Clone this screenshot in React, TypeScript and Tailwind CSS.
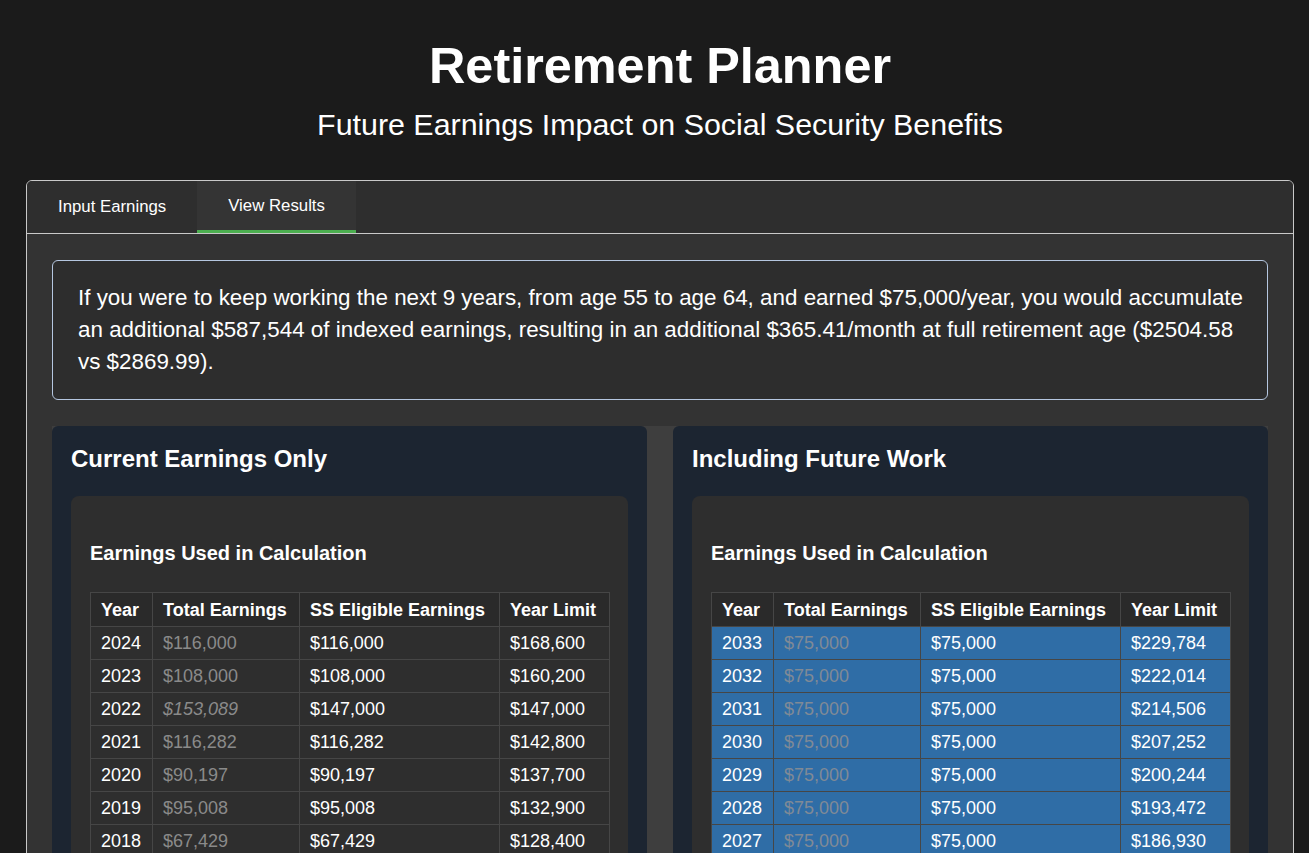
import React, { useState } from 'react';

type Row = { year: number; total: number; limit: number };

const currentRows: Row[] = [
  { year: 2024, total: 116000, limit: 168600 },
  { year: 2023, total: 108000, limit: 160200 },
  { year: 2022, total: 153089, limit: 147000 },
  { year: 2021, total: 116282, limit: 142800 },
  { year: 2020, total: 90197, limit: 137700 },
  { year: 2019, total: 95008, limit: 132900 },
  { year: 2018, total: 67429, limit: 128400 },
  { year: 2017, total: 71250, limit: 127200 },
  { year: 2016, total: 64810, limit: 118500 },
  { year: 2015, total: 58300, limit: 118500 },
];

const futureLimits = [229784, 222014, 214506, 207252, 200244, 193472, 186930, 180609, 174500];

const futureRows: Row[] = [
  ...futureLimits.map((limit, i) => ({ year: 2033 - i, total: 75000, limit })),
  ...currentRows,
];

const fmt = (n: number) => '$' + n.toLocaleString('en-US');

const EarningsTable: React.FC<{ rows: Row[]; futureFrom?: number }> = ({ rows, futureFrom }) => (
  <table className="w-full table-fixed border-collapse text-[18px] leading-[20px]">
    <colgroup>
      <col className="w-[62px]" />
      <col className="w-[147px]" />
      <col className="w-[200px]" />
      <col className="w-[110px]" />
    </colgroup>
    <thead>
      <tr className="bg-[#2a2a2a] text-left">
        <th className="border border-[#464646] px-[10px] pt-[7px] pb-[6px] font-bold">Year</th>
        <th className="border border-[#464646] px-[10px] pt-[7px] pb-[6px] font-bold">Total Earnings</th>
        <th className="border border-[#464646] px-[10px] pt-[7px] pb-[6px] font-bold">SS Eligible Earnings</th>
        <th className="border border-[#464646] px-[10px] pt-[7px] pb-[6px] font-bold">Year Limit</th>
      </tr>
    </thead>
    <tbody>
      {rows.map((r) => {
        const isFuture = futureFrom !== undefined && r.year >= futureFrom;
        const overLimit = r.total > r.limit;
        return (
          <tr key={r.year} className={isFuture ? 'bg-[#2f6da6]' : ''}>
            <td className="border border-[#464646] px-[10px] py-[6px]">{r.year}</td>
            <td className={`border border-[#464646] px-[10px] py-[6px] ${isFuture ? 'text-[#808a96]' : 'text-[#8a8a8a]'} ${overLimit ? 'italic' : ''}`}>
              {fmt(r.total)}
            </td>
            <td className="border border-[#464646] px-[10px] py-[6px]">{fmt(Math.min(r.total, r.limit))}</td>
            <td className="border border-[#464646] px-[10px] py-[6px]">{fmt(r.limit)}</td>
          </tr>
        );
      })}
    </tbody>
  </table>
);

const ResultPanel: React.FC<{ title: string; rows: Row[]; futureFrom?: number }> = ({ title, rows, futureFrom }) => (
  <div className="bg-[#1c2531] rounded-md p-[19px]">
    <h2 className="text-[24px] leading-[28px] font-bold">{title}</h2>
    <div className="mt-[23px] bg-[#2e2e2e] rounded-lg px-[19px] pt-[19px] pb-[19px]">
      <h3 className="mt-[26px] mb-[27px] text-[20px] leading-[24px] font-bold">Earnings Used in Calculation</h3>
      <EarningsTable rows={rows} futureFrom={futureFrom} />
    </div>
  </div>
);

export default function App() {
  const [tab, setTab] = useState<'input' | 'results'>('results');

  return (
    <div className="min-h-screen bg-[#1b1b1b] text-white font-['Liberation_Sans',Arial,sans-serif] pl-[26px] pr-[15px] pt-[37px] pb-10">
      <h1 className="text-center text-[50.4px] leading-[1.15] font-bold">Retirement Planner</h1>
      <p className="text-center text-[30.4px] leading-[1.15] mt-[12px]">Future Earnings Impact on Social Security Benefits</p>

      <div className="mt-[38px] border border-[#c9c9c9] rounded-md overflow-hidden bg-[#333333]">
        <div className="flex bg-[#2e2e2e] border-b border-[#c9c9c9]">
          <button
            onClick={() => setTab('input')}
            className={`h-[52px] px-[31px] text-[16.8px] ${tab === 'input' ? 'bg-[#343434] border-b-[3px] border-[#4caf50]' : ''}`}
          >
            Input Earnings
          </button>
          <button
            onClick={() => setTab('results')}
            className={`h-[52px] px-[31px] text-[16.8px] ${tab === 'results' ? 'bg-[#343434] border-b-[3px] border-[#4caf50]' : ''}`}
          >
            View Results
          </button>
        </div>

        <div className="pt-[26px] px-[25px] pb-[26px]">
          <div className="border border-[#b5c7e0] rounded-md bg-[#2d2d2d] pl-[25px] pr-[20px] py-[21px] text-[22.4px] leading-[32px]">
            If you were to keep working the next 9 years, from age 55 to age 64, and earned $75,000/year, you would accumulate an additional $587,544 of indexed earnings, resulting in an additional $365.41/month at full retirement age ($2504.58 vs $2869.99).
          </div>

          <div className="mt-[26px] grid grid-cols-2 gap-[26px] bg-[#3e3e3e]">
            <ResultPanel title="Current Earnings Only" rows={currentRows} />
            <ResultPanel title="Including Future Work" rows={futureRows} futureFrom={2025} />
          </div>
        </div>
      </div>
    </div>
  );
}
